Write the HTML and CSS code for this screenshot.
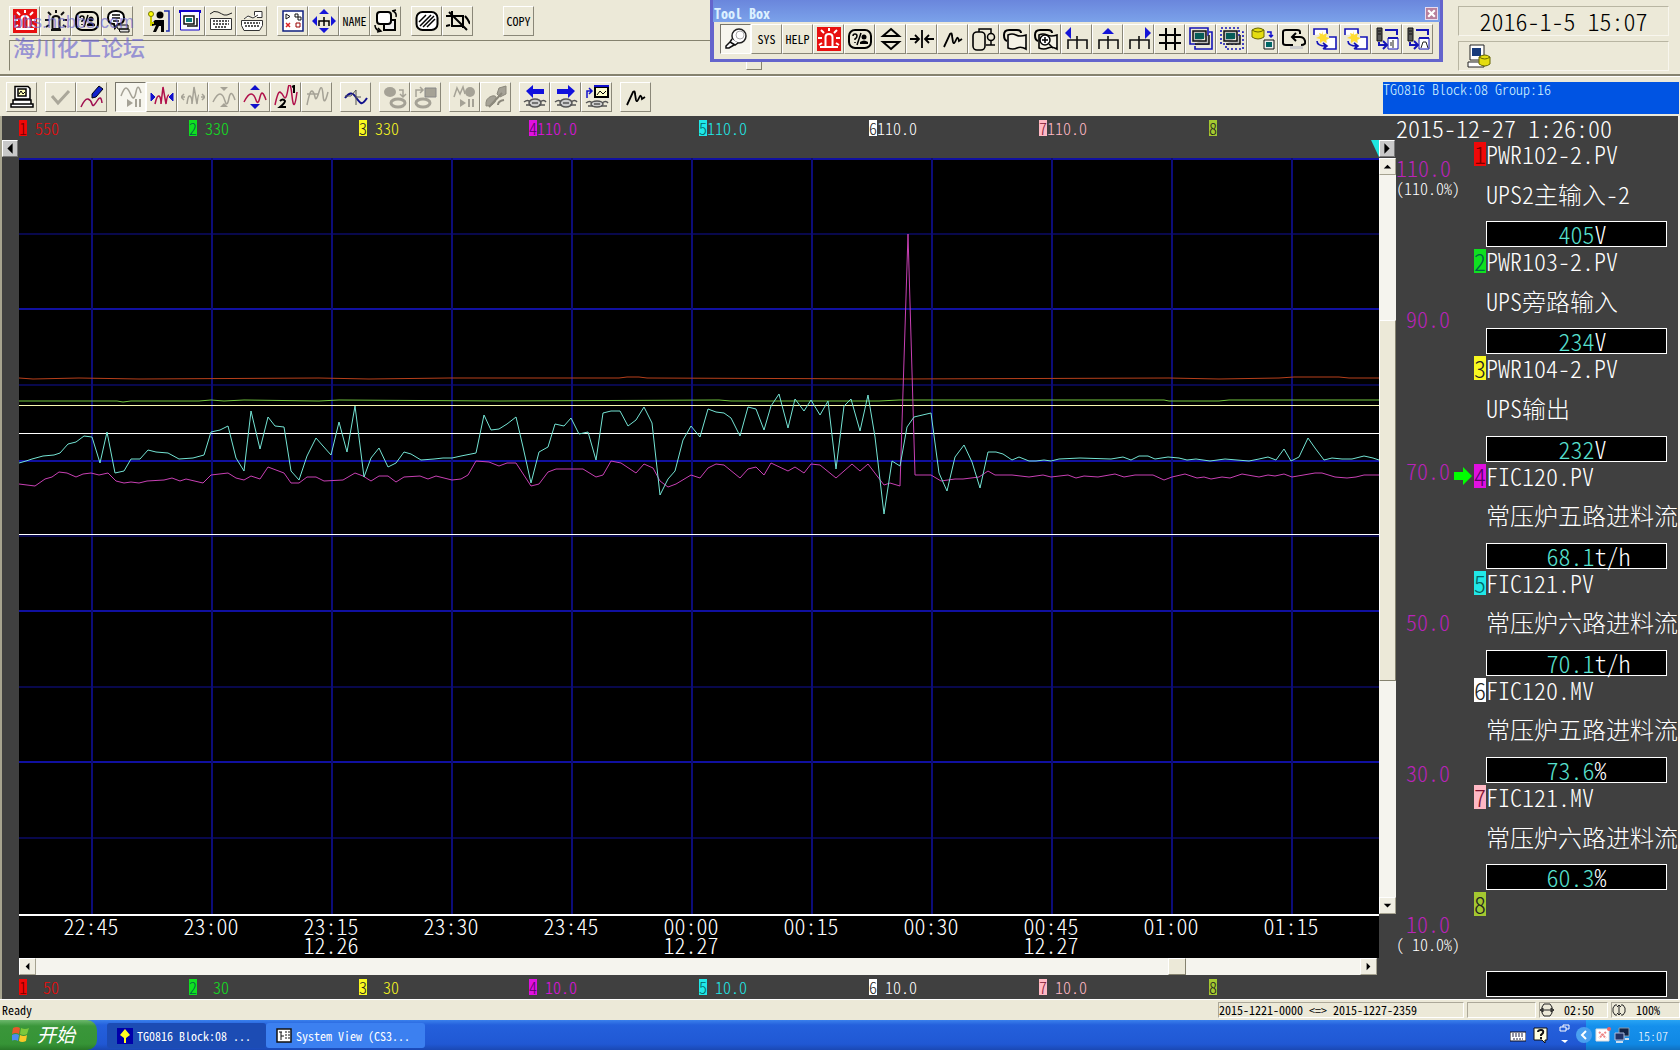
FILE: index.html
```html
<!DOCTYPE html>
<html lang="zh-CN">
<head>
<meta charset="utf-8">
<title>TG0816 Block:08 Group:16</title>
<link rel="stylesheet" href="styles.css">
</head>
<body>
<svg class="defs" aria-hidden="true">
  <symbol id="alarm" viewBox="0 0 24 24"><rect width="24" height="24" fill="#e81010"/><path d="M8.500 20V10q0-3 3.500-3t3.500 3v10zM3 20h18M12 1v3M4 3l3 3M20 3l-3 3M1 11h4M19 11h4M2 18l3-2M22 18l-3-2" fill="none" stroke="#fff" stroke-width="2"/></symbol>
  <symbol id="lamp" viewBox="0 0 24 24"><path d="M8.500 20V10q0-3 3.500-3t3.500 3v10zM7 21h10M12 1v3M4 3l3 3M20 3l-3 3M1 11h4M19 11h4M2 18l3-2M22 18l-3-2" fill="none" stroke="#111" stroke-width="2"/></symbol>
  <symbol id="face" viewBox="0 0 24 24"><rect x="1" y="3" width="22" height="18" rx="6" fill="none" stroke="#000" stroke-width="2"/><path d="M5 9q0-2 2-2t2 2-2 3v1M7 15v1M13 6L9 18" fill="none" stroke="#000" stroke-width="1.500"/><circle cx="16" cy="10" r="2.500"/><path d="M12 17v-2q4-3 8 0v2z"/></symbol>
  <symbol id="talk" viewBox="0 0 24 24"><path d="M10 16h12v4H12zM13 20h10v3H14z" fill="#ddd" stroke="#000"/><path d="M8 15q-6 0-6-6.500T10 2t8 6.500-6 6.500l-3 4z" fill="#fff" stroke="#000" stroke-width="2"/><path d="M6 6h8M6 9h8M7 12h6" stroke="#000" stroke-width="1.500"/></symbol>
  <symbol id="user" viewBox="0 0 24 24"><circle cx="13" cy="6" r="3.500"/><path d="M8 11h9v12h-3v-6h-2l-3 6H6l3-7-4 1v-3z"/><path d="M17 2h5v20h-3" fill="none" stroke="#2030b0" stroke-width="1.500"/><circle cx="4" cy="5" r="2.500" fill="#ff0" stroke="#770"/><path d="M4 8v9M4 14h3" stroke="#cc0" stroke-width="2"/></symbol>
  <symbol id="window" viewBox="0 0 24 24"><path d="M1 2.500h22" stroke="#10c" stroke-width="3"/><path d="M2.500 3v18h19V3" fill="#f8f8ff" stroke="#10c"/><path d="M6 7h10v8H6zM9 17h10v-8" fill="#fff" stroke="#111" stroke-width="1.500"/><path d="M8 9h6v4H8z" fill="#087878"/></symbol>
  <symbol id="keys" viewBox="0 0 24 24"><path d="M1 5q4-4 8-2t6 3 8-2" fill="none" stroke="#222"/><path d="M1.500 9.500h21v11h-21z" fill="#fff" stroke="#333"/><path d="M4 12h16M4 15h16M6 18h12" stroke="#222" stroke-width="1.500" stroke-dasharray="2 1"/></symbol>
  <symbol id="keyout" viewBox="0 0 24 24"><path d="M14.500 6.500V2.500H22v6h-5M4 10l4-3 5 2 5-3" fill="#fff" stroke="#333"/><path d="M1.500 11.500h21v5l-3 5H4l-2.500-5z" fill="#fff" stroke="#333"/><path d="M4 14h16M5 17h14" stroke="#222" stroke-width="1.500" stroke-dasharray="2 1"/></symbol>
  <symbol id="graphic" viewBox="0 0 24 24"><path d="M2 2h20v20H2z" fill="#fff" stroke="#102080" stroke-width="1.500"/><path d="M5 5v5l4-2.500zM14 5h3v3h-3zM17 8h3v3h-3z" fill="none" stroke="#111"/><path d="M5 14l4 4M9 14l-4 4" fill="none" stroke="#d22" stroke-width="1.500"/><path d="M15 14h4v4h-4z" fill="none" stroke="#900"/></symbol>
  <symbol id="tune" viewBox="0 0 24 24"><path d="M12 0l5 5H7zM12 24l5-5H7zM0 12l5-5v10zM24 12l-5-5v10z" fill="#1414d8"/><path d="M7 17v-5h10v5M12 8v9" fill="none" stroke="#000" stroke-width="1.500"/></symbol>
  <symbol id="swap" viewBox="0 0 24 24"><path d="M10 11h11v10H10z" fill="#eee" stroke="#000" stroke-width="2"/><rect x="3" y="3" width="14" height="12" rx="3" fill="#fff" stroke="#000" stroke-width="2"/><path d="M19 2q4 2 3 6M18 2l4-1M5 22q-4-2-4-6M3 23l4-1-3-3" fill="none" stroke="#000" stroke-width="1.500"/></symbol>
  <symbol id="hatch" viewBox="0 0 24 24"><rect x="1.500" y="3" width="21" height="18" rx="6" fill="#fff" stroke="#000" stroke-width="2"/><path d="M4 13l7-7M5 17L16 6M8 18L19 7M12 18l8-8" stroke="#000" stroke-width="1.500"/></symbol>
  <symbol id="cross" viewBox="0 0 24 24"><path d="M0 7h17v12M6 2v15h12M3 3l18 18M0 17l4-1M19 7q3 3 5 8" fill="none" stroke="#000" stroke-width="2"/></symbol>
  <symbol id="pc" viewBox="0 0 24 24"><path d="M5 1.500h13l2 2V14H5zM3 15h18v4H3zM1 19h22v3H1z" fill="#fff" stroke="#000" stroke-width="1.500"/><path d="M8 4h8v7H8z" fill="#ffb" stroke="#000" stroke-width="1.500"/><path d="M9 9l2-3 2 3 2-2" fill="none" stroke="#000"/></symbol>
  <symbol id="check" viewBox="0 0 24 24"><path d="M3 11l6 7L20 6" fill="none" stroke="#aaa79a" stroke-width="3"/></symbol>
  <symbol id="pen" viewBox="0 0 24 24"><path d="M1 22q4-9 7-8t4 5 5-3 5 2" fill="none" stroke="#a01050" stroke-width="1.500"/><path d="M12 9L19 1l4 3-7 8-4 1z" fill="#12c" stroke="#001"/></symbol>
  <symbol id="play" viewBox="0 0 24 24"><path d="M2 11q3-8 5-8t5 7 5-3 5 1" fill="none" stroke="#a5a296" stroke-width="1.500"/><path d="M8 14l6 4-6 4zM16 14h2v8h-2zM20 14h2v8h-2z" fill="#a5a296"/></symbol>
  <symbol id="wide" viewBox="0 0 24 24"><path d="M5 19q2-9 4-8t2 8l2-17 3 17q1-9 3-9" fill="none" stroke="#b0104a" stroke-width="1.500"/><path d="M5 12L1 8v8zM19 12l4-4v8z" fill="#11c" stroke="#11c"/></symbol>
  <symbol id="widegray" viewBox="0 0 24 24"><path d="M6 19q1-9 3-8t2 8l2-17 3 17q1-9 2-9M0 12h4M20 12h4M3 9l-3 3 3 3M21 9l3 3-3 3" fill="none" stroke="#a5a296" stroke-width="1.500"/></symbol>
  <symbol id="shrink" viewBox="0 0 24 24"><path d="M1 17q4-8 7-8t5 7 4-3 6 2" fill="none" stroke="#a5a296" stroke-width="1.500"/><path d="M12 6L8 2h8zM12 18l-4 4h8z" fill="#a5a296"/></symbol>
  <symbol id="grow" viewBox="0 0 24 24"><path d="M1 17q4-8 7-8t5 6 4-3 6 3" fill="none" stroke="#b0104a" stroke-width="1.500"/><path d="M12 0L7 5h10zM12 24l-5-5h10z" fill="#11c"/></symbol>
  <symbol id="onetwo" viewBox="0 0 24 24"><path d="M1 20Q4 6 6 7t4 5 4-8 4 7 5-4" fill="none" stroke="#b0104a" stroke-width="1.500"/><path d="M18 2l2-1v7M6 16q3-3 5 0 0 2-5 6h6" fill="none" stroke="#000" stroke-width="2"/></symbol>
  <symbol id="wavegray" viewBox="0 0 24 24"><path d="M2 20Q5 5 7 6t3 6 4-5 4 3 5-3M2 9h12" fill="none" stroke="#a5a296" stroke-width="1.500"/></symbol>
  <symbol id="sine" viewBox="0 0 24 24"><path d="M1 13q6-8 10-2t6 7 6-5" fill="none" stroke="#10108c" stroke-width="2"/><path d="M1 11h6l5-6v15M12 12h5" fill="none" stroke="#555"/></symbol>
  <symbol id="dbgray" viewBox="0 0 24 24"><ellipse cx="7" cy="7" rx="6" ry="5" fill="#a5a296"/><path d="M16 5h4v6M17 9l3 3 3-3" fill="none" stroke="#a5a296" stroke-width="1.500"/><ellipse cx="15" cy="18" rx="7" ry="4" fill="none" stroke="#a5a296" stroke-width="3"/></symbol>
  <symbol id="pcgray" viewBox="0 0 24 24"><path d="M11 3h11v9H11z" fill="#a5a296" stroke="#888"/><path d="M2 12V5h6M6 2l3 3-3 3" fill="none" stroke="#a5a296" stroke-width="1.500"/><ellipse cx="9" cy="18" rx="7" ry="4" fill="none" stroke="#a5a296" stroke-width="3"/></symbol>
  <symbol id="playgray" viewBox="0 0 24 24"><path d="M1 12L4 3l3 6 3-7 2 7" fill="none" stroke="#a5a296" stroke-width="1.500"/><circle cx="17" cy="7" r="5" fill="#a5a296"/><path d="M7 14l6 4-6 4zM15 14h2v8h-2zM19 14h2v8h-2z" fill="#a5a296"/></symbol>
  <symbol id="brush" viewBox="0 0 24 24"><path d="M2 21q-1-8 6-10 5-1 4 3-1 7-10 7zM13 9L15 3l7-2v8l-6 3z" fill="#a5a296" stroke="#8c897c"/><path d="M5 22L18 8M14 20q0-4 6-5" stroke="#8c897c" stroke-width="2" fill="none"/></symbol>
  <symbol id="left" viewBox="0 0 24 24"><path d="M3 6l7-6v4h11v5H10v4z" fill="#11d"/><ellipse cx="12" cy="18" rx="6" ry="4" fill="#ccc" stroke="#555" stroke-width="1.500"/><path d="M1 17q4-3 6 0M3 20h5M17 17q4-3 6 0M16 20h6M9 18h6" fill="none" stroke="#555" stroke-width="1.500"/></symbol>
  <symbol id="right" viewBox="0 0 24 24"><path d="M21 6l-7-6v4H3v5h11v4z" fill="#11d"/><ellipse cx="12" cy="18" rx="6" ry="4" fill="#ccc" stroke="#555" stroke-width="1.500"/><path d="M1 17q4-3 6 0M3 20h5M17 17q4-3 6 0M16 20h6M9 18h6" fill="none" stroke="#555" stroke-width="1.500"/></symbol>
  <symbol id="up" viewBox="0 0 24 24"><path d="M2 13V6h4M4 3l3 3-3 3" fill="none" stroke="#11c" stroke-width="1.500"/><path d="M10 2h13v10H10z" fill="#ffc" stroke="#000" stroke-width="2"/><path d="M9 1h15" stroke="#11c" stroke-width="2"/><path d="M12 10l3-4 3 3 3-3" fill="none" stroke="#000"/><ellipse cx="12" cy="19" rx="6" ry="3" fill="#ccc" stroke="#555" stroke-width="1.500"/><path d="M1 18q4-3 6 0M3 21h5M17 18q4-3 6 0M16 21h6M9 19h6" fill="none" stroke="#555" stroke-width="1.500"/></symbol>
  <symbol id="wave" viewBox="0 0 24 24"><path d="M3 20L9 7q2-2 2 2l1 6q1 3 3-2t3 1l3-2" fill="none" stroke="#000" stroke-width="1.800"/></symbol>
  <symbol id="search" viewBox="0 0 24 24"><circle cx="15" cy="9" r="7" fill="#fff" stroke="#222" stroke-width="1.500"/><circle cx="16" cy="8" r="4" fill="none" stroke="#aaa"/><path d="M8 12l-2 3 5 3 3-2M6 15l-4 4v2h3l5-3" fill="#fff" stroke="#111" stroke-width="1.500"/></symbol>
  <symbol id="updown" viewBox="0 0 24 24"><path d="M12 2l8 7H4zM12 22l8-7H4z" fill="none" stroke="#000" stroke-width="2"/></symbol>
  <symbol id="inout" viewBox="0 0 24 24"><path d="M12 3v18M0 12h9M5 8l4 4-4 4M24 12h-9M19 8l-4 4 4 4" fill="none" stroke="#000" stroke-width="1.800"/></symbol>
  <symbol id="tank" viewBox="0 0 24 24"><rect x="1" y="5" width="12" height="18" rx="4" fill="none" stroke="#000" stroke-width="1.600"/><path d="M7 5V2h12v5M14 18h9M19 13v5" fill="none" stroke="#000" stroke-width="1.500"/><circle cx="19" cy="10" r="3.500" fill="none" stroke="#000" stroke-width="1.500"/></symbol>
  <symbol id="pages" viewBox="0 0 24 24"><path d="M4 14Q1 13 1 8t5-5h8q4 0 4 3" fill="none" stroke="#000" stroke-width="2"/><path d="M5 8q4-2 8 0t10 0v14q-5-3-9-1t-9 0z" fill="#f4f2e6" stroke="#000" stroke-width="1.600"/></symbol>
  <symbol id="zoom" viewBox="0 0 24 24"><path d="M4 14Q1 13 1 8t5-5h8q4 0 4 3" fill="none" stroke="#000" stroke-width="2"/><path d="M5 8q4-2 8 0t10 0v14q-5-3-9-1t-9 0z" fill="#f4f2e6" stroke="#000" stroke-width="1.600"/><circle cx="11" cy="13" r="5" fill="#fff" stroke="#000" stroke-width="1.500"/><path d="M8 13h6M11 10v6M15 17l4 4" stroke="#000" stroke-width="1.500"/></symbol>
  <symbol id="treeleft" viewBox="0 0 24 24"><path d="M0 6l6-6v12z" fill="#1414d8"/><path d="M3 22v-9h19v9M12 9v13" fill="none" stroke="#111" stroke-width="1.600"/></symbol>
  <symbol id="treeup" viewBox="0 0 24 24"><path d="M12 1l6 6H6z" fill="#1414d8"/><path d="M3 22v-9h19v9M12 9v13" fill="none" stroke="#111" stroke-width="1.600"/></symbol>
  <symbol id="treeright" viewBox="0 0 24 24"><path d="M24 6l-6-6v12z" fill="#1414d8"/><path d="M3 22v-9h19v9M12 9v13" fill="none" stroke="#111" stroke-width="1.600"/></symbol>
  <symbol id="hash" viewBox="0 0 24 24"><path d="M8 1v22M17 1v22M1 8h22M1 16h22" stroke="#000" stroke-width="2"/></symbol>
  <symbol id="screen" viewBox="0 0 24 24"><path d="M1 1h18v16H1z" fill="none" stroke="#1414b8" stroke-width="1.600"/><path d="M6 19v3h17V5h-3" fill="none" stroke="#1414b8" stroke-width="1.600"/><path d="M4 4h13v10H4zM6 17h14V8" fill="#bbb" stroke="#111" stroke-width="1.500"/><path d="M6 6h9v6H6z" fill="#075c58"/></symbol>
  <symbol id="screendash" viewBox="0 0 24 24"><path d="M1 1h18v16H1zM6 19v3h17V5h-3" fill="none" stroke="#1414b8" stroke-width="1.600" stroke-dasharray="2 2"/><path d="M4 4h13v10H4zM6 17h14V8" fill="#bbb" stroke="#111" stroke-width="1.500"/><path d="M6 6h9v6H6z" fill="#075c58"/></symbol>
  <symbol id="db" viewBox="0 0 24 24"><path d="M1 3q6-4 12 0v7q-6 4-12 0z" fill="#e4dc10" stroke="#660"/><path d="M1 3q6 4 12 0" fill="none" stroke="#660"/><path d="M16 5h4v5M18 8l2 2 2-2" fill="none" stroke="#11c" stroke-width="1.500"/><path d="M13 13h10v9H13z" fill="#eee" stroke="#111"/><path d="M15 15h6v5h-6z" fill="#066"/></symbol>
  <symbol id="back" viewBox="0 0 24 24"><path d="M8 19h13v3H8z" fill="#ccc"/><path d="M18 7V5q0-2-3-2H4Q1 3 1 5v11q0 2 3 2h7M14 6l-4 4 4 4M10 10h8q4 0 5 4t-4 4" fill="none" stroke="#000" stroke-width="2"/></symbol>
  <symbol id="flash" viewBox="0 0 24 24"><path d="M1 8V2h13v5M16 10h7v12H12v-4" fill="#fff" stroke="#1414b8" stroke-width="1.600"/><path d="M9 4l1 4 4-2-1 4 4 1-4 2 1 3-4-2-3 2v-4l-4-1 4-2-1-3 3 1z" fill="#fd3"/><path d="M4 14q0 5 9 5M10 16l4 3-4 3" fill="none" stroke="#1414b8" stroke-width="1.600"/></symbol>
  <symbol id="link" viewBox="0 0 24 24"><path d="M2 1h5v13H2zM3 4h3M3 7h3" fill="#555" stroke="#111"/><path d="M10 3h12v5M4 15v3h7M8 14l4 4-4 4" fill="none" stroke="#1414b8" stroke-width="2"/><path d="M13 11h10v11H13z" fill="#fff" stroke="#1414b8"/><path d="M13 11h10" stroke="#1414b8" stroke-width="2"/><path d="M18 13v8M16 15v4" stroke="#222"/></symbol>
  <symbol id="linkwave" viewBox="0 0 24 24"><path d="M2 1h5v13H2zM3 4h3M3 7h3" fill="#555" stroke="#111"/><path d="M10 3h12v5M4 15v3h7M8 14l4 4-4 4" fill="none" stroke="#1414b8" stroke-width="2"/><path d="M13 11h10v11H13z" fill="#fff" stroke="#1414b8"/><path d="M13 11h10" stroke="#1414b8" stroke-width="2"/><path d="M15 21l2-6h3l2 6" fill="none" stroke="#222"/></symbol>
  <symbol id="station" viewBox="0 0 24 24"><path d="M3 1h14v15H3zM1 18h16v5H1z" fill="#fff" stroke="#222"/><path d="M5 4h9v8H5z" fill="#173a7a"/><path d="M12 13q6-4 11 0v7q-5 4-11 0z" fill="#e4dc10" stroke="#660"/><path d="M12 13q6 4 11 0" fill="none" stroke="#660"/></symbol>
  <symbol id="tri-l" viewBox="0 0 16 16"><path d="M11 2v12L5 8z"/></symbol>
  <symbol id="tri-r" viewBox="0 0 16 16"><path d="M5 2v12l6-6z"/></symbol>
  <symbol id="sm-l" viewBox="0 0 16 16"><path d="M10 4v8L6 8z"/></symbol>
  <symbol id="sm-r" viewBox="0 0 16 16"><path d="M6 4v8l4-4z"/></symbol>
  <symbol id="sm-u" viewBox="0 0 16 16"><path d="M4 10h8L8 6z"/></symbol>
  <symbol id="sm-d" viewBox="0 0 16 16"><path d="M4 6h8l-4 4z"/></symbol>
</svg>

<header class="top">
  <div class="top-left">
    <div class="bar">
      <div class="group"><button aria-label="Alarm"><svg><use href="#alarm"/></svg></button><button aria-label="Lamp"><svg><use href="#lamp"/></svg></button><button aria-label="Guide"><svg><use href="#face"/></svg></button><button aria-label="Messages"><svg><use href="#talk"/></svg></button></div>
      <div class="group"><button aria-label="User"><svg><use href="#user"/></svg></button><button aria-label="Window"><svg><use href="#window"/></svg></button><button aria-label="Operation keys"><svg><use href="#keys"/></svg></button><button aria-label="Preset"><svg><use href="#keyout"/></svg></button></div>
      <div class="group"><button aria-label="Graphic"><svg><use href="#graphic"/></svg></button><button aria-label="Navigate"><svg><use href="#tune"/></svg></button><button>NAME</button><button aria-label="Swap"><svg><use href="#swap"/></svg></button></div>
      <div class="group"><button aria-label="Clear"><svg><use href="#hatch"/></svg></button><button aria-label="Reset"><svg><use href="#cross"/></svg></button></div>
      <div class="group apart"><button>COPY</button></div>
    </div>
    <div class="message"><button class="drop" aria-label="Messages list"></button></div>
    <div class="mark"><span class="mark-url">bbs.hcbbs.com</span><span class="mark-name">海川化工论坛</span></div>
  </div>
  <div class="clock">
    <time class="well now">2016-1-5 15:07</time>
    <div class="well"><svg><use href="#station"/></svg></div>
  </div>
</header>

<section class="toolbox" aria-label="Tool Box">
  <div class="toolbox-title"><span>Tool Box</span><button class="close" aria-label="Close"><svg viewBox="0 0 10 10"><path d="M2 2l6 6M8 2l-6 6" stroke="#fff" stroke-width="2"/></svg></button></div>
  <div class="group toolbox-body">
    <button class="down" aria-label="Search"><svg><use href="#search"/></svg></button><button>SYS</button><button>HELP</button><button aria-label="Alarm"><svg><use href="#alarm"/></svg></button><button aria-label="Guide"><svg><use href="#face"/></svg></button><button aria-label="Tuning"><svg><use href="#updown"/></svg></button><button aria-label="Control"><svg><use href="#inout"/></svg></button><button aria-label="Trend"><svg><use href="#wave"/></svg></button><button aria-label="Tank"><svg><use href="#tank"/></svg></button><button aria-label="Pages"><svg><use href="#pages"/></svg></button><button aria-label="Zoom"><svg><use href="#zoom"/></svg></button><button aria-label="Previous"><svg><use href="#treeleft"/></svg></button><button aria-label="Upper"><svg><use href="#treeup"/></svg></button><button aria-label="Next"><svg><use href="#treeright"/></svg></button><button aria-label="Number"><svg><use href="#hash"/></svg></button><button aria-label="Screen"><svg><use href="#screen"/></svg></button><button aria-label="Screen area"><svg><use href="#screendash"/></svg></button><button aria-label="Load"><svg><use href="#db"/></svg></button><button aria-label="Back"><svg><use href="#back"/></svg></button><button aria-label="Call"><svg><use href="#flash"/></svg></button><button aria-label="Call next"><svg><use href="#flash"/></svg></button><button aria-label="Link"><svg><use href="#link"/></svg></button><button aria-label="Link trend"><svg><use href="#linkwave"/></svg></button>
  </div>
</section>

<nav class="bar tools">
  <div class="group"><button aria-label="Station"><svg><use href="#pc"/></svg></button></div>
  <div class="group"><button aria-label="Accept"><svg><use href="#check"/></svg></button><button aria-label="Pen"><svg><use href="#pen"/></svg></button></div>
  <div class="group"><button class="down" aria-label="Pause"><svg><use href="#play"/></svg></button><button aria-label="Widen"><svg><use href="#wide"/></svg></button><button aria-label="Narrow"><svg><use href="#widegray"/></svg></button><button aria-label="Shrink"><svg><use href="#shrink"/></svg></button><button aria-label="Grow"><svg><use href="#grow"/></svg></button><button aria-label="Order"><svg><use href="#onetwo"/></svg></button><button aria-label="Initial"><svg><use href="#wavegray"/></svg></button></div>
  <div class="group"><button aria-label="Reference"><svg><use href="#sine"/></svg></button></div>
  <div class="group"><button aria-label="Save"><svg><use href="#dbgray"/></svg></button><button aria-label="Restore"><svg><use href="#pcgray"/></svg></button></div>
  <div class="group"><button aria-label="Run"><svg><use href="#playgray"/></svg></button><button aria-label="Paint"><svg><use href="#brush"/></svg></button></div>
  <div class="group"><button aria-label="Back"><svg><use href="#left"/></svg></button><button aria-label="Forward"><svg><use href="#right"/></svg></button><button aria-label="Up"><svg><use href="#up"/></svg></button></div>
  <div class="group"><button aria-label="Trend"><svg><use href="#wave"/></svg></button></div>
  <h1 class="title">TG0816 Block:08 Group:16</h1>
</nav>

<main class="main">
  <section class="trend">
    <div class="legend">
      <span class="c1"><b>1</b> 550</span><span class="c2"><b>2</b> 330</span><span class="c3"><b>3</b> 330</span><span class="c4"><b>4</b>110.0</span><span class="c5"><b>5</b>110.0</span><span class="c6"><b>6</b>110.0</span><span class="c7"><b>7</b>110.0</span><span class="c8"><b>8</b></span>
    </div>
    <div class="timebar">
      <button class="gray" aria-label="Earlier"><svg><use href="#tri-l"/></svg></button>
      <span class="cursor"><svg class="flag" viewBox="0 0 8 17" aria-hidden="true"><path d="M0 0h8v17z" fill="#1ee6e0"/></svg><button class="gray" aria-label="Later"><svg><use href="#tri-r"/></svg></button></span>
    </div>
    <div class="plotrow">
      <svg class="plot" viewBox="0 0 1360 756" preserveAspectRatio="none" role="img" aria-label="Trend">
        <path class="dim" d="M0 76H1360M0 227H1360M0 378H1360M0 529H1360M0 680H1360"/>
        <path class="grid" d="M0 1H1360M0 151H1360M0 303H1360M0 453H1360M0 604H1360"/>
        <path class="vert" d="M73 0V756M193 0V756M313 0V756M433 0V756M553 0V756M673 0V756M793 0V756M913 0V756M1033 0V756M1153 0V756M1273 0V756"/>
        <polyline class="l1" points="0,220 14,221 60,220 120,221 300,220 350,221 430,220 600,220 608,219 620,219 628,220 880,221 1150,220 1200,221 1260,220 1275,219 1320,219 1330,220 1360,220"/>
        <polyline class="l2" points="0,243 98,243 104,244 112,243 180,243 192,242 205,243 225,242 300,243 320,242 480,243 700,242 712,243 860,243 880,242 1145,242 1150,243 1200,243 1210,242 1360,242"/>
        <path class="l3" d="M0 247H1360"/>
        <path class="l6" d="M0 275H1360M0 376H1360"/>
        <polyline class="l4" points="0,326 16,328 26,321 33,319 40,314 48,315 57,319 64,316 72,315 80,317 89,315 97,323 105,325 112,324 120,325 128,323 145,322 153,320 161,323 167,321 184,325 192,317 209,315 217,320 225,322 232,318 241,321 249,309 265,315 272,325 280,325 288,319 297,319 305,323 324,322 336,315 344,318 352,323 360,318 369,318 377,324 385,319 401,318 409,321 417,318 433,322 442,321 449,317 457,303 470,304 480,308 488,305 497,305 512,328 520,326 529,314 537,311 564,311 577,319 584,317 592,303 602,305 617,315 625,306 634,310 641,323 649,329 657,326 672,317 681,320 689,310 697,306 705,307 721,320 729,311 737,309 745,317 752,305 769,313 776,309 785,315 792,306 801,307 817,320 833,306 841,313 849,306 865,327 871,325 881,328 889,76 896,317 912,317 922,323 936,321 944,321 960,319 969,313 976,317 993,317 1010,319 1024,317 1032,319 1049,317 1057,320 1065,318 1079,319 1096,316 1105,319 1116,317 1134,317 1145,322 1153,319 1166,316 1178,320 1185,319 1192,321 1203,319 1211,320 1223,316 1240,319 1249,317 1256,318 1265,316 1273,319 1296,315 1303,315 1316,319 1328,320 1337,319 1345,317 1360,317"/>
        <polyline class="l5" points="0,305 7,303 13,301 24,298 35,297 41,295 49,286 57,284 65,278 73,279 81,305 88,274 96,315 105,313 112,301 121,301 129,292 137,294 149,295 160,301 174,300 185,297 192,274 201,272 209,268 217,300 225,313 232,253 241,291 249,259 256,268 265,269 272,313 280,322 288,298 297,280 304,288 312,297 320,264 328,294 336,248 345,319 352,300 360,290 369,309 377,305 385,294 392,296 402,302 415,301 424,300 433,300 442,298 457,295 465,257 472,272 480,271 488,266 497,259 504,289 512,325 520,294 529,289 536,266 545,268 552,260 560,276 569,274 577,302 584,255 592,253 601,253 609,268 617,262 625,249 633,265 641,337 649,321 656,313 664,282 672,268 681,279 689,251 697,254 705,255 712,260 721,278 729,249 737,251 745,272 752,248 760,236 769,270 776,241 785,253 792,242 801,257 809,243 817,311 825,248 832,241 841,273 849,237 856,279 865,356 873,303 881,308 888,269 895,259 912,255 920,315 928,333 936,299 945,287 953,304 961,330 969,294 977,294 984,296 993,302 1000,299 1010,303 1017,303 1025,302 1032,303 1040,301 1061,300 1092,301 1104,299 1112,302 1120,298 1129,298 1136,301 1149,299 1160,300 1168,302 1177,301 1191,303 1206,301 1230,303 1240,301 1249,299 1257,302 1265,291 1272,303 1280,299 1289,280 1296,290 1305,302 1313,300 1323,301 1333,301 1345,298 1354,300 1360,302"/>
      </svg>
      <div class="scroll vertical"><button aria-label="Scroll up"><svg><use href="#sm-u"/></svg></button><div class="track"><div class="thumb"></div></div><button aria-label="Scroll down"><svg><use href="#sm-d"/></svg></button></div>
    </div>
    <div class="times">
      <span>22:45</span><span>23:00</span><span>23:15<br>12.26</span><span>23:30</span><span>23:45</span><span>00:00<br>12.27</span><span>00:15</span><span>00:30</span><span>00:45<br>12.27</span><span>01:00</span><span>01:15</span>
    </div>
    <div class="scroll horizontal"><button aria-label="Scroll left"><svg><use href="#sm-l"/></svg></button><div class="track"><div class="thumb"></div></div><button aria-label="Scroll right"><svg><use href="#sm-r"/></svg></button></div>
    <div class="legend">
      <span class="c1"><b>1</b>  50</span><span class="c2"><b>2</b>  30</span><span class="c3"><b>3</b>  30</span><span class="c4"><b>4</b> 10.0</span><span class="c5"><b>5</b> 10.0</span><span class="c6"><b>6</b> 10.0</span><span class="c7"><b>7</b> 10.0</span><span class="c8"><b>8</b></span>
    </div>
  </section>

  <aside class="side">
    <time class="stamp">2015-12-27 1:26:00</time>
    <div class="side-body">
      <div class="axis">
        <div>110.0<small>(110.0%)</small></div><div>90.0</div><div>70.0</div><div>50.0</div><div>30.0</div><div>10.0<small>( 10.0%)</small></div>
      </div>
      <ol class="pens">
        <li class="c1"><div class="name"><b>1</b>PWR102-2.PV</div><div class="desc">UPS2主输入-2</div><div class="value"><span>405</span>V</div></li>
        <li class="c2"><div class="name"><b>2</b>PWR103-2.PV</div><div class="desc">UPS旁路输入</div><div class="value"><span>234</span>V</div></li>
        <li class="c3"><div class="name"><b>3</b>PWR104-2.PV</div><div class="desc">UPS输出</div><div class="value"><span>232</span>V</div></li>
        <li class="c4"><svg class="pointer" viewBox="0 0 18 18" aria-hidden="true"><path d="M0 5h9V0l9 9-9 9v-5H0z" fill="#0f0"/></svg><div class="name"><b>4</b>FIC120.PV</div><div class="desc">常压炉五路进料流</div><div class="value"><span>68.1</span>t/h</div></li>
        <li class="c5"><div class="name"><b>5</b>FIC121.PV</div><div class="desc">常压炉六路进料流</div><div class="value"><span>70.1</span>t/h</div></li>
        <li class="c6"><div class="name"><b>6</b>FIC120.MV</div><div class="desc">常压炉五路进料流</div><div class="value"><span>73.6</span>%</div></li>
        <li class="c7"><div class="name"><b>7</b>FIC121.MV</div><div class="desc">常压炉六路进料流</div><div class="value"><span>60.3</span>%</div></li>
        <li class="c8"><div class="name"><b>8</b></div><div class="desc"></div><div class="value"></div></li>
      </ol>
    </div>
  </aside>
</main>

<footer class="status">
  <span class="ready">Ready</span>
  <span class="cell range">2015-1221-0000 &lt;=&gt; 2015-1227-2359</span>
  <span class="cell blank"></span>
  <span class="cell span"><svg viewBox="0 0 14 14"><path d="M4 1h6l2 3v6l-2 3H4l-2-3V4zM1 7h12M0 7l3-2v4zM14 7l-3-2v4z" fill="none" stroke="#222"/></svg>02:50</span>
  <span class="cell scale"><svg viewBox="0 0 14 14"><path d="M5 2H3L1 5v4l2 3h2M9 2h2l2 3v4l-2 3H9M7 2v10M5 4l2-2 2 2M5 10l2 2 2-2" fill="none" stroke="#222"/></svg>100%</span>
</footer>

<div class="taskbar">
  <button class="start"><svg viewBox="0 0 18 18"><path d="M1 3q4-2 7 0l-1 6q-3-2-7 0z" fill="#e8582c"/><path d="M9 3q4 2 8 0l-2 6q-3 2-7 0z" fill="#7cc83c"/><path d="M0 10q4-2 7 0l-1 6q-3-2-7 0z" fill="#4c8cf0"/><path d="M8 10q4 2 7 0l-1 6q-4 2-7 0z" fill="#f8c828"/></svg>开始</button>
  <button class="task active"><svg viewBox="0 0 16 16"><path d="M0 0h16v16H0z" fill="#00a"/><path d="M8 1l5 6-4 3v5H7v-5L3 7z" fill="#ff2"/></svg>TG0816 Block:08 ...</button>
  <button class="task"><svg viewBox="0 0 16 16"><path d="M1 1h14v13H1z" fill="#fff" stroke="#111" stroke-width="1.500"/><path d="M3 4h3M5 4v8M5 8h3M9 4h2M9 7h2M9 10h2M12 4h2M12 7h2M12 10h2" stroke="#111"/></svg>System View (CS3...</button>
  <div class="lang">
    <svg viewBox="0 0 16 16"><path d="M0 5h16v9H0z" fill="#fff" stroke="#112"/><path d="M2 7h12M2 9h12M3 12h10" stroke="#224" stroke-dasharray="2 1"/></svg>
    <svg viewBox="0 0 16 16"><path d="M1 1h13v12h-2v3l-3-3H1z" fill="#ffffe0" stroke="#111"/><path d="M5 5q0-2 3-2t2 3l-2 2v1M8 10v2" fill="none" stroke="#111" stroke-width="2"/></svg>
    <svg class="bar-size" viewBox="0 0 16 24"><path d="M4 4h6v4H4zM7 4V2h6v4h-3" fill="none" stroke="#fff"/><path d="M5 17h7l-3 3z" fill="#fff"/></svg>
  </div>
  <div class="tray">
    <svg class="chev" viewBox="0 0 16 16"><circle cx="8" cy="8" r="8" fill="#4aa0f0"/><path d="M10 4L6 8l4 4" fill="none" stroke="#fff" stroke-width="2"/></svg>
    <svg viewBox="0 0 16 16"><path d="M1 2h13v12H1z" fill="#fff" stroke="#ddd"/><path d="M4 5l7 6M11 5l-7 6" stroke="#e88" stroke-width="2" stroke-dasharray="2 1"/><circle cx="14" cy="2" r="2" fill="#e66"/></svg>
    <svg viewBox="0 0 16 16"><path d="M5 1h10v8H5z" fill="#124" stroke="#89a"/><path d="M1 6h9v7H1z" fill="#236" stroke="#abd"/><path d="M2 15h7M11 12h4" stroke="#cde" stroke-width="2"/></svg>
    <time>15:07</time>
  </div>
</div>
</body>
</html>
```
FILE: styles.css
```css
* { box-sizing: border-box; }
html, body { margin: 0; height: 100%; }
body {
  display: flex;
  flex-direction: column;
  min-height: 100vh;
  position: relative;
  background: #ece9d8;
  color: #000;
  font-family: "Noto Sans CJK SC", "Liberation Mono", sans-serif;
  font-weight: 300;
  font-feature-settings: "hwid";
  font-size: 12px;
  overflow: hidden;
}
button, h1, ol { font: inherit; margin: 0; padding: 0; }
button { color: inherit; border: 0; background: none; }
svg { display: block; flex: none; }
b { font-weight: inherit; }
.defs { position: absolute; width: 0; height: 0; }

/* toolbars */
.top {
  display: flex;
  justify-content: space-between;
  height: 77px;
  padding: 6px 11px 0 9px;
  border-bottom: 2px solid #85826f;
}
.top-left { position: relative; width: 754px; }
.bar { display: flex; gap: 10px; }
.group { display: flex; }
.group.apart { margin-left: 20px; }
.group button {
  display: flex;
  align-items: center;
  justify-content: center;
  width: 31px;
  height: 30px;
  border: 1px solid;
  border-color: #fff #8a8778 #8a8778 #fff;
  line-height: 16px;
  font-weight: 400;
}
.group button svg { width: 24px; height: 24px; }
.group button.down { background: #f7f6ee; border-color: #77756a #fff #fff #77756a; }
.message {
  display: flex;
  justify-content: flex-end;
  align-items: flex-end;
  height: 31px;
  margin-top: 4px;
  border: 1px solid;
  border-color: #85826f transparent transparent #85826f;
}
.drop { width: 16px; height: 26px; border: 1px solid; border-color: #fff #85826f #85826f #fff; }
.mark {
  position: absolute;
  left: 4px;
  top: 4px;
  display: flex;
  flex-direction: column;
  color: #6c66d0;
  opacity: 0.65;
  pointer-events: none;
  font-feature-settings: normal;
}
.mark-url { font: 18px/24px "Liberation Sans", sans-serif; }
.mark-name { font-size: 22px; line-height: 24px; font-weight: 500; }
.clock { display: flex; flex-direction: column; gap: 5px; width: 211px; }
.well {
  display: flex;
  align-items: center;
  height: 30px;
  padding: 0 8px;
  border: 1px solid;
  border-color: #b8b5a2 #f8f6ee #f8f6ee #b8b5a2;
}
.well svg { width: 24px; height: 24px; }
.now { justify-content: center; font-size: 24px; line-height: 28px; }

.toolbox {
  position: absolute;
  top: 0;
  left: 710px;
  width: 733px;
  height: 62px;
  background: #ece9d8;
  border: 4px solid #6464cc;
  border-top: 0;
  border-bottom-width: 3px;
}
.toolbox-title {
  display: flex;
  justify-content: space-between;
  align-items: center;
  height: 22px;
  margin: 0 -1px;
  padding: 4px 2px 0 1px;
  background: linear-gradient(#6a86dc, #7ba2ea);
  color: #dcf0ff;
  font-size: 14px;
  line-height: 18px;
  font-weight: 700;
}
.close { width: 13px; height: 13px; background: #b8809c; border: 1px solid #e8dcf0; }
.close svg { width: 11px; height: 11px; }
.toolbox-body { padding: 2px 6px; }

.tools { height: 40px; gap: 8px; padding: 5px 1px 0 6px; border-top: 1px solid #fff; }
.title {
  width: 296px;
  height: 32px;
  margin-left: auto;
  background: #0054e3;
  color: #d8f4ff;
  font-size: 14px;
  line-height: 14px;
}

/* trend area */
.main {
  display: flex;
  flex: 1;
  background: #404040;
  border-left: 2px solid #a8a590;
  border-right: 2px solid #f4f4ec;
  color: #fff;
}
.trend { display: flex; flex-direction: column; flex: 1; min-width: 0; }
.legend {
  display: grid;
  grid-template-columns: repeat(8, 1fr);
  align-items: center;
  height: 24px;
  padding: 0 17px;
  font-size: 16px;
  line-height: 16px;
  white-space: pre;
}
.legend span { color: var(--pen); }
.legend b, .name b { display: inline-block; background: var(--pen); color: var(--ink, #222); }
.c1 { --pen: #f00808; --ink: #700; }
.c2 { --pen: #10e020; --ink: #064; }
.c3 { --pen: #f8f820; }
.c4 { --pen: #e010e0; --ink: #506; }
.c5 { --pen: #20e8e8; --ink: #066; }
.c6 { --pen: #fff; }
.c7 { --pen: #ffb8c4; --ink: #801030; }
.c8 { --pen: #a4c830; }
.timebar { display: flex; justify-content: space-between; height: 18px; }
.cursor { display: flex; padding-right: 1px; }
.flag { width: 8px; height: 17px; }
.gray { width: 16px; height: 17px; background: #c8c8c8; border: 1px solid; border-color: #fff #777 #777 #fff; }
.gray svg { width: 14px; height: 15px; }
.plotrow { display: flex; flex: 1; margin-left: 17px; min-height: 0; }
.plot { flex: 1; min-width: 0; height: 100%; background: #000; }
.plot * { fill: none; stroke-width: 1px; vector-effect: non-scaling-stroke; }
.plot .dim { stroke: #08084c; stroke-width: 2px; }
.plot .grid { stroke: #1010a0; stroke-width: 2px; }
.plot .vert { stroke: #0c0c78; stroke-width: 2px; }
.plot .l1 { stroke: #b8401c; }
.plot .l2 { stroke: #74c840; }
.plot .l3 { stroke: #f8f8b0; }
.plot .l4 { stroke: #c840b4; }
.plot .l5 { stroke: #74e4d4; }
.plot .l6 { stroke: #fff; }
.plot .l3, .plot .l6, .plot .dim, .plot .grid, .plot .vert { shape-rendering: crispEdges; }
.scroll { display: flex; background: #f5f4ee; }
.scroll button { width: 17px; height: 17px; background: #f0eee2; border: 1px solid; border-color: #fff #a5a290 #a5a290 #fff; }
.scroll button svg { width: 15px; height: 15px; }
.track { display: flex; flex: 1; }
.thumb { background: #ece9d8; border: 1px solid; border-color: #fff #85826f #85826f #fff; }
.vertical { flex-direction: column; width: 17px; }
.vertical .track { flex-direction: column; }
.vertical .thumb { height: 50%; margin-top: 145px; }
.horizontal { height: 17px; margin: 0 19px 0 17px; }
.horizontal .track { justify-content: flex-end; }
.horizontal .thumb { width: 18px; margin-right: 174px; }
.times {
  display: grid;
  grid-template-columns: repeat(11, 1fr);
  height: 44px;
  margin: 0 17px;
  padding: 0 28px 0 12px;
  background: #000;
  border-top: 2px solid #fff;
  font-size: 22px;
  line-height: 19px;
  text-align: center;
}

/* pen panel */
.side { display: flex; flex-direction: column; width: 282px; }
.stamp { height: 26px; font-size: 24px; line-height: 24px; }
.side-body { display: flex; flex: 1; }
.axis {
  display: flex;
  flex-direction: column;
  justify-content: space-between;
  width: 78px;
  padding: 13px 0 64px;
  color: #b824b8;
  font-size: 22px;
  line-height: 24px;
}
.axis div { height: 24px; padding-right: 24px; text-align: right; }
.axis small {
  display: block;
  margin-right: -24px;
  color: #fff;
  font-size: 16px;
  line-height: 18px;
  text-align: left;
  white-space: pre;
}
.pens { display: flex; flex-direction: column; flex: 1; min-width: 0; list-style: none; font-size: 24px; line-height: 24px; }
.pens li { position: relative; display: flex; flex: 1; flex-direction: column; padding: 0 0 2px 12px; }
.name { height: 24px; margin-left: -12px; }
.name b { width: 12px; height: 24px; }
.desc { display: flex; flex: 1; align-items: center; overflow: hidden; white-space: nowrap; }
.value {
  display: flex;
  height: 26px;
  margin-right: 11px;
  background: #000;
  border: 1px solid #fff;
}
.value span { width: 60%; color: #58e0d0; text-align: right; }
.pointer { position: absolute; left: -20px; top: 3px; width: 18px; height: 18px; }

/* status bar */
.status { display: flex; gap: 3px; height: 21px; padding: 2px 0 2px 2px; line-height: 16px; font-weight: 400; border-top: 1px solid #fff; }
.ready { flex: 1; }
.cell { display: flex; align-items: center; border: 1px solid; border-color: #aca899 #fff #fff #aca899; }
.cell svg { width: 14px; height: 14px; }
.range { width: 246px; }
.blank { width: 69px; }
.span { width: 69px; gap: 10px; }
.scale { width: 69px; gap: 10px; }

/* task bar */
.taskbar {
  display: flex;
  height: 30px;
  background: linear-gradient(#3a80ec, #2460dc 5px, #2058d4 24px, #1a48b4);
  color: #fff;
}
.start {
  display: flex;
  align-items: center;
  gap: 7px;
  width: 97px;
  margin-right: 10px;
  padding: 0 0 3px 12px;
  background: linear-gradient(#6cb86c, #3a963a 6px, #369436 24px, #287828);
  border-radius: 0 10px 10px 0;
  font-size: 19px;
  line-height: 24px;
  font-style: italic;
  font-weight: 400;
}
.start svg { width: 18px; height: 18px; }
.task {
  display: flex;
  align-items: center;
  gap: 4px;
  width: 159px;
  height: 25px;
  margin: 3px 0 0;
  padding-left: 10px;
  background: #3c80f0;
  border-radius: 3px;
  font-weight: 400;
}
.task.active { background: #1c4cb4; }
.task svg, .lang svg, .tray svg { width: 16px; height: 16px; }
.lang { display: flex; align-items: center; gap: 7px; margin-left: auto; padding-right: 14px; }
.lang .bar-size { height: 24px; }
.tray {
  display: flex;
  align-items: center;
  gap: 3px;
  width: 94px;
  padding-right: 12px;
  background: linear-gradient(#28a4f4, #1590ec 6px, #1088e4 24px, #1070c0);
}
.tray .chev { margin-left: -10px; }
.tray time { margin-left: auto; }
```
